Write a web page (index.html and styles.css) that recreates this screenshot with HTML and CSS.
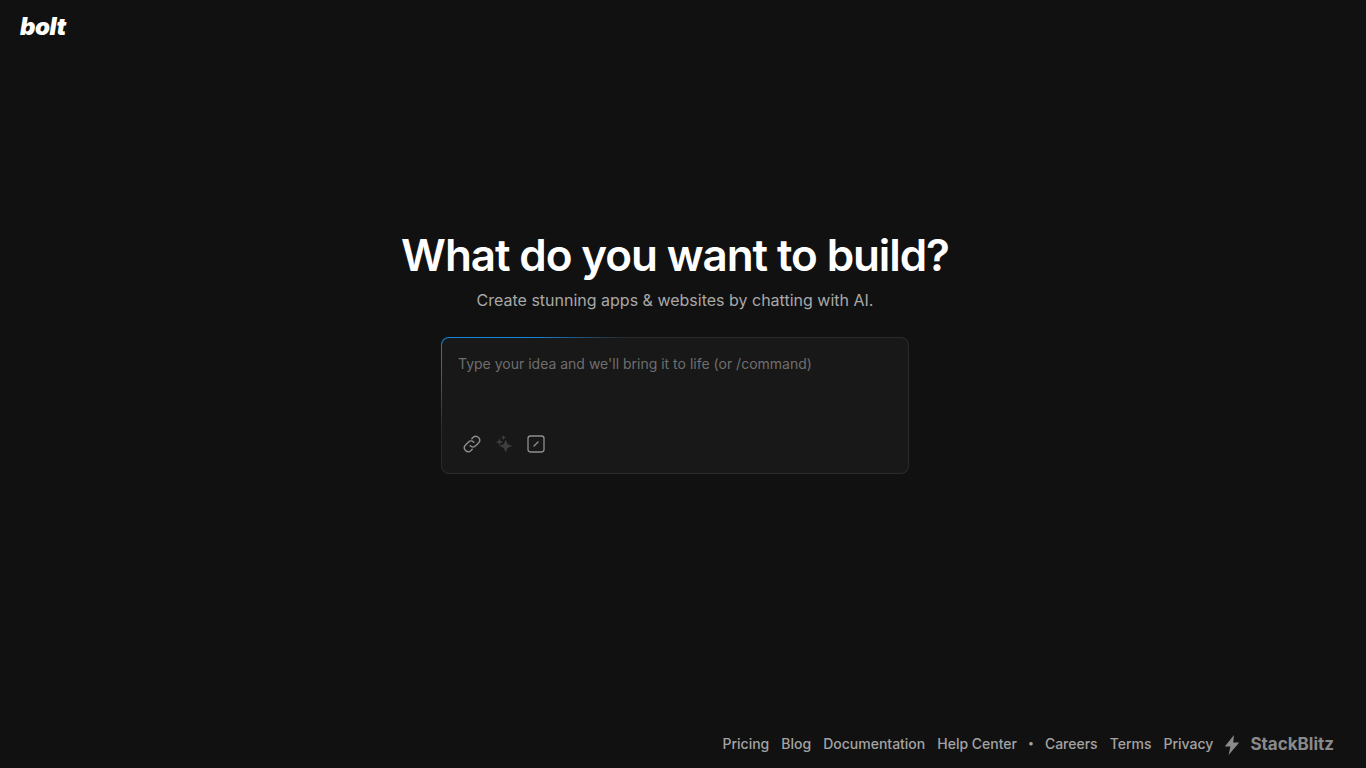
FILE: index.html
```html
<!DOCTYPE html>
<html lang="en">
<head>
  <meta charset="UTF-8" />
  <title>bolt</title>
  <link rel="stylesheet" href="styles.css">
</head>
<body>
  <header class="topbar">
    <a class="logo" href="#">bolt</a>
  </header>

  <main class="hero">
    <h1>What do you want to build?</h1>
    <p class="sub">Create stunning apps &amp; websites by chatting with AI.</p>

    <div class="prompt">
      <div class="placeholder">Type your idea and we'll bring it to life (or /command)</div>
      <div class="tools">
        <button class="tool">
          <svg width="20" height="20" viewBox="0 0 20 20" fill="none" stroke="#8f8f8f" stroke-width="1.4" stroke-linecap="round" stroke-linejoin="round">
            <path d="M8.2 11.8a3.9 3.9 0 0 0 5.5 0l3-3a3.9 3.9 0 0 0-5.5-5.5l-1.4 1.4"/>
            <path d="M11.8 8.2a3.9 3.9 0 0 0-5.5 0l-3 3a3.9 3.9 0 0 0 5.5 5.5l1.4-1.4"/>
          </svg>
        </button>
        <button class="tool">
          <svg width="20" height="20" viewBox="0 0 20 20" fill="#3d3d3d">
            <path d="M11.7 5.5l1.9 4.6 4.6 1.9-4.6 1.9-1.9 4.6-1.9-4.6L5.2 12l4.6-1.9z"/>
            <path d="M5.5 4.2l1.1 2.7 2.7 1.1-2.7 1.1-1.1 2.7-1.1-2.7L1.7 8l2.7-1.1z"/>
            <path d="M9.5 0.8l.8 1.9 1.9.8-1.9.8-.8 1.9-.8-1.9-1.9-.8 1.9-.8z"/>
          </svg>
        </button>
        <button class="tool">
          <svg width="20" height="20" viewBox="0 0 20 20" fill="none" stroke="#8f8f8f" stroke-linecap="round">
            <rect x="2" y="2" width="16" height="16" rx="2.4" stroke-width="1.3"/>
            <path d="M8 12l4-4" stroke-width="1.3"/>
          </svg>
        </button>
      </div>
    </div>
  </main>

  <footer class="footer">
    <nav class="links">
      <a href="#">Pricing</a>
      <a href="#">Blog</a>
      <a href="#">Documentation</a>
      <a href="#">Help Center</a>
      <span class="dot">•</span>
      <a href="#">Careers</a>
      <a href="#">Terms</a>
      <a href="#">Privacy</a>
    </nav>
    <a class="brand" href="#">
      <svg class="brand-icon" width="16" height="20" viewBox="0 0 16 20" fill="#8a8a8a">
        <path d="M10 0L0.8 11.4h5.6L4.6 20l10.6-12.6H9.2z"/>
      </svg>
      <span>StackBlitz</span>
    </a>
  </footer>
</body>
</html>
```

FILE: styles.css
```css
html, body {
  height: 100%;
}
body {
  margin: 0;
  height: 768px;
  overflow: hidden;
  display: flex;
  flex-direction: column;
  background: #111111;
  color: #fff;
  font-family: 'Inter', 'Liberation Sans', sans-serif;
}
a {
  color: inherit;
  text-decoration: none;
}
.topbar {
  height: 52px;
  padding-left: 20px;
  flex: none;
}
.logo {
  display: inline-block;
  font-size: 24px;
  line-height: 26px;
  padding-top: 14px;
  font-weight: 900;
  font-style: italic;
  letter-spacing: -0.5px;
  color: #fff;
}
.hero {
  flex: 1;
  display: flex;
  flex-direction: column;
  align-items: center;
  padding-top: 175px;
  padding-right: 16px;
}
h1 {
  margin: 0;
  font-size: 44px;
  line-height: 56px;
  font-weight: 600;
  letter-spacing: -1.1px;
  color: #fff;
  text-align: center;
}
.sub {
  margin: 5px 0 0;
  font-size: 16px;
  line-height: 24px;
  color: #a8a8a8;
}
.prompt {
  margin-top: 25px;
  width: 468px;
  height: 137px;
  box-sizing: border-box;
  padding: 16px 16px 15px 16px;
  display: flex;
  flex-direction: column;
  justify-content: space-between;
  border: 1px solid transparent;
  border-radius: 8px;
  background:
    linear-gradient(#181818, #181818) padding-box,
    radial-gradient(ellipse 130px 100px at 50px 0, #1488e0 0%, #1488e0 30%, rgba(20, 136, 224, 0) 100%) border-box,
    linear-gradient(#2a2a2a, #2a2a2a) border-box;
}
.placeholder {
  font-size: 14px;
  line-height: 20px;
  color: #6e6e6e;
}
.tools {
  display: flex;
  gap: 4px;
}
.tool {
  width: 28px;
  height: 28px;
  padding: 0;
  display: flex;
  align-items: center;
  justify-content: center;
  background: none;
  border: none;
}
.footer {
  flex: none;
  display: flex;
  justify-content: flex-end;
  align-items: center;
  gap: 11px;
  height: 48px;
  padding-bottom: 2px;
  box-sizing: border-box;
  padding-right: 32px;
}
.links {
  display: flex;
  align-items: center;
  gap: 12px;
  font-size: 14px;
  font-weight: 500;
  color: #a3a3a3;
}
.dot {
  font-size: 11px;
  margin: 0 -1px;
}
.brand {
  display: flex;
  align-items: center;
  gap: 10px;
  font-size: 17px;
  font-weight: 700;
  color: #8a8a8a;
}
.brand span {
  margin-top: 2px;
}
.brand-icon {
  margin-top: 3px;
}
```
